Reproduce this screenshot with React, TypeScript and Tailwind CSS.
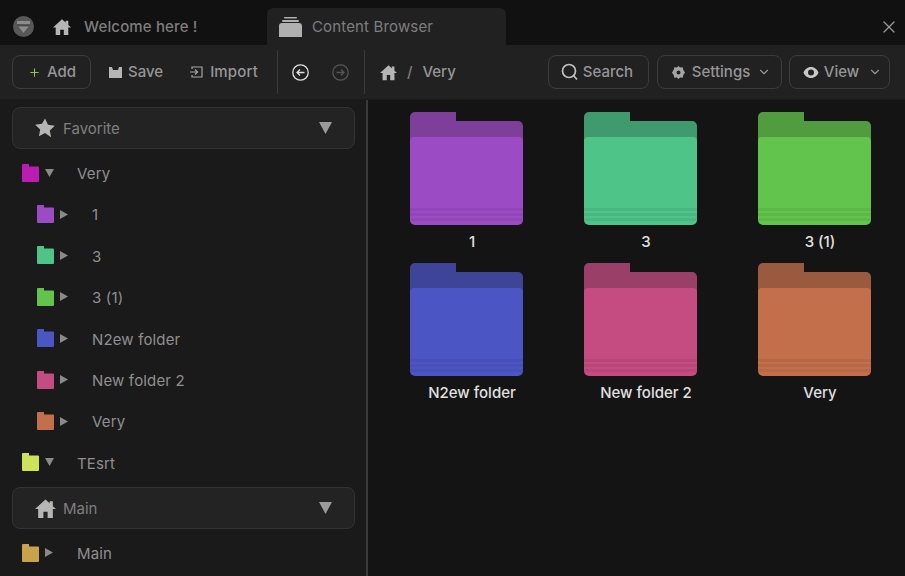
import { ChevronDown, X, Plus } from 'lucide-react';

const font = { fontFamily: 'Inter, sans-serif' };

interface FolderItem {
  name: string;
  back: string;
  front: string;
  stripe: string;
}

const folders: FolderItem[] = [
  { name: '1', back: '#7d3f9a', front: '#9b4cc4', stripe: '#9247b8' },
  { name: '3', back: '#3f9a6d', front: '#4ec489', stripe: '#49b880' },
  { name: '3 (1)', back: '#509c3e', front: '#62c44c', stripe: '#5cb847' },
  { name: 'N2ew folder', back: '#3e4599', front: '#4b55c4', stripe: '#4750b8' },
  { name: 'New folder 2', back: '#9a3f67', front: '#c44c80', stripe: '#b84778' },
  { name: 'Very', back: '#9a5a3f', front: '#c46f4c', stripe: '#b86847' },
];

function BigFolder({ item }: { item: FolderItem }) {
  return (
    <svg width="113" height="113" viewBox="0 0 113 113">
      <path d="M0 5a5 5 0 0 1 5-5h41v9h62a5 5 0 0 1 5 5v30H0z" fill={item.back} />
      <path d="M0 29a4 4 0 0 1 4-4h105a4 4 0 0 1 4 4v79a5 5 0 0 1-5 5H5a5 5 0 0 1-5-5z" fill={item.front} />
      <rect x="0" y="96" width="113" height="3" fill={item.stripe} />
      <rect x="0" y="101" width="113" height="3" fill={item.stripe} />
      <rect x="0" y="106" width="113" height="3" fill={item.stripe} />
    </svg>
  );
}

function SmallFolder({ color }: { color: string }) {
  return (
    <svg width="17" height="18" viewBox="0 0 17 18" className="shrink-0">
      <path d="M0 1a1 1 0 0 1 1-1h6v2.500h9a1 1 0 0 1 1 1V17a1 1 0 0 1-1 1H1a1 1 0 0 1-1-1z" fill={color} />
    </svg>
  );
}

function Arrow({ open }: { open: boolean }) {
  return open ? (
    <svg width="9" height="8" viewBox="0 0 9 8" className="shrink-0">
      <path d="M0 0h9L4.500 8z" fill="#8a8a8a" />
    </svg>
  ) : (
    <svg width="8" height="9" viewBox="0 0 8 9" className="shrink-0">
      <path d="M0 0l8 4.500L0 9z" fill="#8a8a8a" />
    </svg>
  );
}

function TreeRow({ name, color, open, child }: { name: string; color: string; open?: boolean; child?: boolean }) {
  return (
    <div className={`flex h-[41.4px] items-center ${child ? 'pl-[37px]' : 'pl-[22px]'}`}>
      <SmallFolder color={color} />
      <div className="ml-[6px] w-[8px]">
        <Arrow open={!!open} />
      </div>
      <span className="mt-[3px] ml-[24px] text-[15px] tracking-[0.01em] text-[#8f8f8f]">{name}</span>
    </div>
  );
}

function SectionHeader({ label, icon }: { label: string; icon: React.ReactNode }) {
  return (
    <div className="mx-[12px] flex h-[42px] w-[343px] items-center rounded-lg border border-[#333333] bg-[#232323] pl-[22px] pr-[22px]">
      <div className="w-[21px] shrink-0">{icon}</div>
      <span className="mt-[2px] ml-[7px] text-[15px] text-[#7f7f7f]">{label}</span>
      <svg width="13" height="12" viewBox="0 0 13 12" className="ml-auto">
        <path d="M0 0h13L6.500 12z" fill="#9a9a9a" />
      </svg>
    </div>
  );
}

function HomeIcon({ size, color }: { size: number; color: string }) {
  return (
    <svg width={size} height={size} viewBox="0 0 20 20">
      <path d="M10 1.500L0 10.500h3V19h5v-6h4v6h5v-8.500h3l-3-2.700V3h-3v2.100z" fill={color} />
    </svg>
  );
}

export default function App() {
  return (
    <div className="flex h-[576px] w-[905px] flex-col overflow-hidden bg-[#121212]" style={font}>
      {/* tabs */}
      <div className="flex h-[45px] shrink-0 items-end bg-[#111111]">
        <div className="flex h-[37px] w-[267px] items-center">
          <div className="ml-[13px] flex h-[21px] w-[21px] items-center justify-center rounded-full bg-[#585858]">
            <svg width="13" height="12" viewBox="0 0 13 12">
              <rect x="0" y="0" width="13" height="3.500" fill="#8c8c8c" />
              <rect x="0" y="3.500" width="13" height="1" fill="#383838" />
              <path d="M1.500 5.500h10L6.500 12z" fill="#8c8c8c" />
            </svg>
          </div>
          <div className="ml-[19px]">
            <HomeIcon size={18} color="#b5b5b5" />
          </div>
          <span className="mt-[2px] ml-[13px] text-[15px] font-medium tracking-[0.01em] whitespace-nowrap text-[#7e7e7e]">Welcome here !</span>
        </div>
        <div className="flex h-[37px] w-[239px] items-center rounded-t-md bg-[#212121] pl-[12px]">
          <svg width="23" height="20" viewBox="0 0 23 20">
            <rect x="5" y="0" width="13" height="1.500" rx="0.700" fill="#b0b0b0" />
            <rect x="3" y="3" width="17" height="2" rx="1" fill="#b0b0b0" />
            <path d="M0 9a3 3 0 0 1 3-3h17a3 3 0 0 1 3 3v11H0z" fill="#b0b0b0" />
          </svg>
          <span className="mt-[2px] ml-[10px] text-[15px] tracking-[0.01em] whitespace-nowrap text-[#7e7e7e]">Content Browser</span>
        </div>
        <div className="ml-auto flex h-[37px] items-center pr-[6px]">
          <X size={20} color="#9a9a9a" strokeWidth={1.500} />
        </div>
      </div>

      {/* toolbar */}
      <div className="flex h-[55px] shrink-0 items-center border-b border-[#1c1c1c] bg-[#212121] text-[15px] font-medium text-[#969696]">
        <button className="ml-[12px] flex h-[34px] w-[79px] items-center rounded-lg border border-[#3c3c3c] pl-[15px]">
          <Plus size={13} color="#8bc34a" strokeWidth={2} />
          <span className="mt-[1px] ml-[6px]">Add</span>
        </button>
        <div className="ml-[18px] flex items-center">
          <svg width="13" height="11" viewBox="0 0 13 11">
            <path d="M0 0h3l1 3h5l1-3h3v11H0z" fill="#b5b5b5" />
          </svg>
          <span className="mt-[1px] ml-[6px]">Save</span>
        </div>
        <div className="ml-[27px] flex items-center">
          <svg width="13" height="12" viewBox="0 0 13 12" fill="none" stroke="#a5a5a5" strokeWidth="1.200">
            <path d="M2 3V1h10v10H2V9M0 6h7M5 3.500L7.500 6 5 8.500" />
          </svg>
          <span className="mt-[1px] ml-[7px] tracking-[0.01em]">Import</span>
        </div>
        <div className="ml-[19px] h-[44px] w-px bg-[#3a3a3a]" />
        <svg width="17" height="17" viewBox="0 0 17 17" fill="none" stroke="#e0e0e0" strokeWidth="1.300" className="ml-[14px]">
          <circle cx="8.500" cy="8.500" r="7.700" />
          <path d="M12.500 8.500H5M8 5.500l-3 3 3 3" />
        </svg>
        <svg width="17" height="17" viewBox="0 0 17 17" fill="none" stroke="#555555" strokeWidth="1.300" className="ml-[23px]">
          <circle cx="8.500" cy="8.500" r="7.700" />
          <path d="M4.500 8.500H12M9 5.500l3 3-3 3" />
        </svg>
        <div className="ml-[15px] h-[44px] w-px bg-[#3a3a3a]" />
        <div className="ml-[15px]">
          <HomeIcon size={17} color="#b5b5b5" />
        </div>
        <span className="mt-[1px] ml-[10px] text-[#7e7e7e]">/</span>
        <span className="mt-[1px] ml-[10px]">Very</span>
        <button className="ml-[92px] flex h-[34px] w-[101px] items-center rounded-lg border border-[#3c3c3c] pl-[12px]">
          <svg width="18" height="18" viewBox="0 0 18 18" fill="none" stroke="#c0c0c0" strokeWidth="1.700">
            <circle cx="8" cy="8" r="6.500" />
            <path d="M12.500 12.500L16 16.500" />
          </svg>
          <span className="mt-[1px] ml-[4px]">Search</span>
        </button>
        <button className="ml-[8px] flex h-[34px] w-[125px] items-center rounded-lg border border-[#3c3c3c] pl-[14px]">
          <svg width="13" height="13" viewBox="0 0 13 13" className="shrink-0">
            <path fillRule="evenodd" d="M6.500 0l1.600 1.500 2.600-.3.500 2.500L13 6.500l-1.800 2.800-.5 2.500-2.600-.3L6.500 13l-1.600-1.500-2.600.3-.5-2.500L0 6.500l1.800-2.800.5-2.500 2.600.3zM6.500 4.500a2 2 0 1 0 0 4 2 2 0 0 0 0-4z" fill="#a5a5a5" />
          </svg>
          <span className="mt-[1px] ml-[7px]">Settings</span>
          <ChevronDown size={14} className="ml-[7px]" />
        </button>
        <button className="ml-[7px] flex h-[34px] w-[101px] items-center rounded-lg border border-[#3c3c3c] pl-[13px]">
          <svg width="16" height="11" viewBox="0 0 15 11" className="shrink-0">
            <path fillRule="evenodd" d="M7.500 0C11 0 14 2.500 15 5.500 14 8.500 11 11 7.500 11S1 8.500 0 5.500C1 2.500 4 0 7.500 0zM7.500 2.500a3 3 0 1 0 0 6 3 3 0 0 0 0-6z" fill="#c8c8c8" />
          </svg>
          <span className="mt-[1px] ml-[5px]">View</span>
          <ChevronDown size={14} className="ml-[9px]" />
        </button>
      </div>

      <div className="flex min-h-0 flex-1">
        {/* sidebar */}
        <div className="w-[366px] shrink-0 bg-[#1a1a1a] pt-[7px]">
          <SectionHeader
            label="Favorite"
            icon={
              <svg width="20" height="20" viewBox="0 0 20 20">
                <path d="M10 .5l3 6.300 6.800.9-5 4.700 1.300 6.800L10 15l-6.100 3.200 1.300-6.800-5-4.700 6.800-.9z" fill="#b5b5b5" />
              </svg>
            }
          />
          <div className="mt-[3px] mb-[4px]">
            <TreeRow name="Very" color="#bb1cb4" open />
            <TreeRow name="1" color="#9b4cc4" child />
            <TreeRow name="3" color="#4ec489" child />
            <TreeRow name="3 (1)" color="#62c44c" child />
            <TreeRow name="N2ew folder" color="#4b55c4" child />
            <TreeRow name="New folder 2" color="#c44c80" child />
            <TreeRow name="Very" color="#c46f4c" child />
            <TreeRow name="TEsrt" color="#cfe35a" open />
          </div>
          <SectionHeader label="Main" icon={<HomeIcon size={21} color="#b5b5b5" />} />
          <div className="mt-[3px]">
            <TreeRow name="Main" color="#c9a24c" />
          </div>
        </div>
        <div className="w-[2px] shrink-0 bg-[#3a3a3a]" />

        {/* content */}
        <div className="min-w-0 flex-1 bg-[#141414] pt-[12px] pl-[42px]">
          <div className="grid grid-cols-[174px_174px_113px] grid-rows-[151px_151px]">
            {folders.map((f) => (
              <div key={f.name} className="flex w-[113px] flex-col">
                <BigFolder item={f} />
                <div className="mt-[6px] flex justify-center pl-[11px] text-[15px] font-medium whitespace-nowrap text-[#e0e0e0]">
                  {f.name}
                </div>
              </div>
            ))}
          </div>
        </div>
      </div>
    </div>
  );
}
